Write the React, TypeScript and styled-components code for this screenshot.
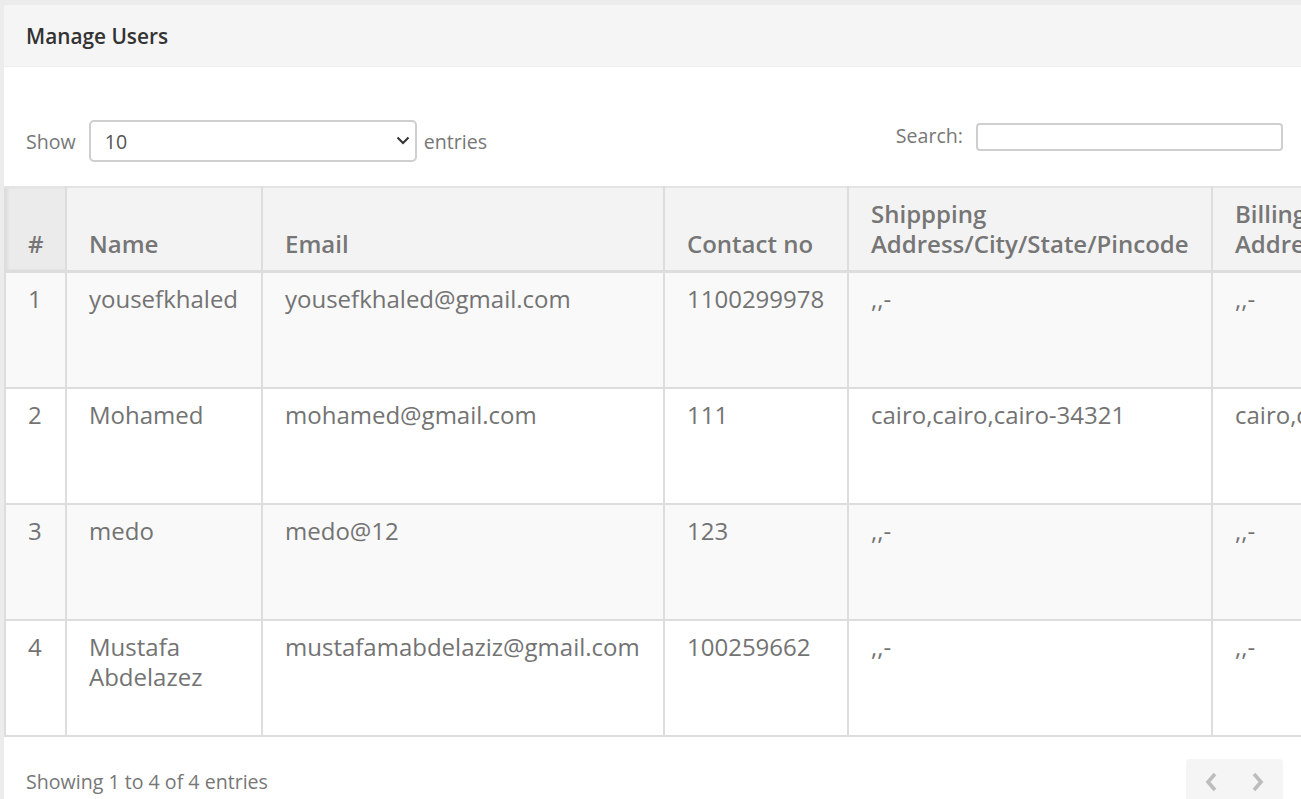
import styled, { createGlobalStyle, css } from "styled-components";

const GlobalStyle = createGlobalStyle`
  html, body {
    margin: 0;
    padding: 0;
    background: #ececec;
    font-family: "Open Sans", "Liberation Sans", sans-serif;
    overflow: hidden;
  }
`;

const Page = styled.div`
  padding: 5px 0 0 4px;
  width: 1297px;
  height: 794px;
  overflow: hidden;
`;

const Panel = styled.div`
  background: #fff;
  border-top-left-radius: 4px;
  height: 100%;
  overflow: hidden;
`;

const PanelHeading = styled.div`
  height: 62px;
  background: #f5f5f5;
  border-bottom: 1px solid #eeeeee;
  box-sizing: border-box;
  padding: 0 22px;
  display: flex;
  align-items: center;
  font-size: 20.8px;
  font-weight: 600;
  color: #333;
`;

const Controls = styled.div`
  display: flex;
  justify-content: space-between;
  align-items: flex-start;
  padding: 53px 18px 0 22px;
  font-size: 19.6px;
  color: #777;
`;

const Group = styled.label`
  display: flex;
  align-items: center;
`;

const SelectBox = styled.div`
  position: relative;
  width: 328px;
  height: 42px;
  box-sizing: border-box;
  border: 2px solid #cfcfcf;
  border-radius: 5px;
  padding-left: 14px;
  margin: 0 7px 0 13px;
  display: flex;
  align-items: center;
  color: #555;
  font-size: 19.6px;
  svg {
    position: absolute;
    right: 5px;
    top: 14px;
  }
`;

const SearchInput = styled.div`
  width: 307px;
  height: 28px;
  box-sizing: border-box;
  border: 2px solid #cfcfcf;
  border-radius: 4px;
  margin: 3px 0 0 13px;
`;

const TableWrap = styled.div`
  margin-top: 24px;
  overflow: hidden;
`;

const Table = styled.table`
  border-collapse: collapse;
  table-layout: fixed;
  width: 1600px;
  color: #737373;
  font-size: 24px;
  line-height: 30px;
`;

const Th = styled.th<{ $sorted?: boolean }>`
  text-align: left;
  vertical-align: bottom;
  font-weight: 600;
  height: 83px;
  box-sizing: border-box;
  padding: 11px 20px 11px 22px;
  background: #f3f3f3;
  border: 2px solid #dddddd;
  border-top: 2px solid #e4e4e4;
  border-bottom: 3px solid #dddddd;
  color: #767676;
  ${(p) =>
    p.$sorted &&
    css`
      background: #ebebeb;
      box-shadow: inset 2px 0 3px rgba(0, 0, 0, 0.06);
    `}
`;

const Row = styled.tr<{ $striped: boolean }>`
  background: ${(p) => (p.$striped ? "#f9f9f9" : "#ffffff")};
`;

const Td = styled.td`
  vertical-align: top;
  height: 116px;
  box-sizing: border-box;
  padding: 11px 20px 10px 22px;
  border: 2px solid #dddddd;
  word-wrap: break-word;
`;

const Footer = styled.div`
  display: flex;
  justify-content: space-between;
  align-items: flex-start;
  padding: 0 18px 0 22px;
  font-size: 19.6px;
  color: #777;
`;

const Info = styled.div`
  margin-top: 31px;
`;

const Pager = styled.div`
  margin-top: 22px;
  width: 97px;
  height: 46px;
  background: #f5f5f5;
  border-radius: 4px;
  display: flex;
  align-items: center;
  justify-content: space-between;
  padding: 0 18px;
  box-sizing: border-box;
`;

const columns = [
  { label: "#", width: 61, sorted: true },
  { label: "Name", width: 196 },
  { label: "Email", width: 402 },
  { label: "Contact no", width: 184 },
  { label: "Shippping Address/City/State/Pincode", width: 364 },
  { label: "Billing Address/City/State/Pincode", width: 392 },
];

const users = [
  ["1", "yousefkhaled", "yousefkhaled@gmail.com", "1100299978", ",,-", ",,-"],
  ["2", "Mohamed", "mohamed@gmail.com", "111", "cairo,cairo,cairo-34321", "cairo,cairo,cairo-34321"],
  ["3", "medo", "medo@12", "123", ",,-", ",,-"],
  ["4", "Mustafa Abdelazez", "mustafamabdelaziz@gmail.com", "100259662", ",,-", ",,-"],
];

const Chevron = ({ dir }: { dir: "left" | "right" }) => (
  <svg width="14" height="22" viewBox="0 0 14 22">
    <path
      d={dir === "left" ? "M11 3 L4 11 L11 19" : "M3 3 L10 11 L3 19"}
      fill="none"
      stroke="#bdbdbd"
      strokeWidth="3.6"
    />
  </svg>
);

export default function App() {
  return (
    <>
      <GlobalStyle />
      <Page>
        <Panel>
          <PanelHeading>Manage Users</PanelHeading>
          <Controls>
            <Group>
              Show
              <SelectBox>
                10
                <svg width="14" height="9" viewBox="0 0 14 9">
                  <path d="M1.5 1.5 L7 7 L12.5 1.5" fill="none" stroke="#333" strokeWidth="2" />
                </svg>
              </SelectBox>
              entries
            </Group>
            <Group>
              Search:
              <SearchInput />
            </Group>
          </Controls>
          <TableWrap>
            <Table>
              <colgroup>
                {columns.map((c) => (
                  <col key={c.label} style={{ width: c.width }} />
                ))}
              </colgroup>
              <thead>
                <tr>
                  {columns.map((c) => (
                    <Th key={c.label} $sorted={c.sorted}>
                      {c.label}
                    </Th>
                  ))}
                </tr>
              </thead>
              <tbody>
                {users.map((u, i) => (
                  <Row key={u[0]} $striped={i % 2 === 0}>
                    {u.map((cell, j) => (
                      <Td key={j}>{cell}</Td>
                    ))}
                  </Row>
                ))}
              </tbody>
            </Table>
          </TableWrap>
          <Footer>
            <Info>Showing 1 to 4 of 4 entries</Info>
            <Pager>
              <Chevron dir="left" />
              <Chevron dir="right" />
            </Pager>
          </Footer>
        </Panel>
      </Page>
    </>
  );
}
